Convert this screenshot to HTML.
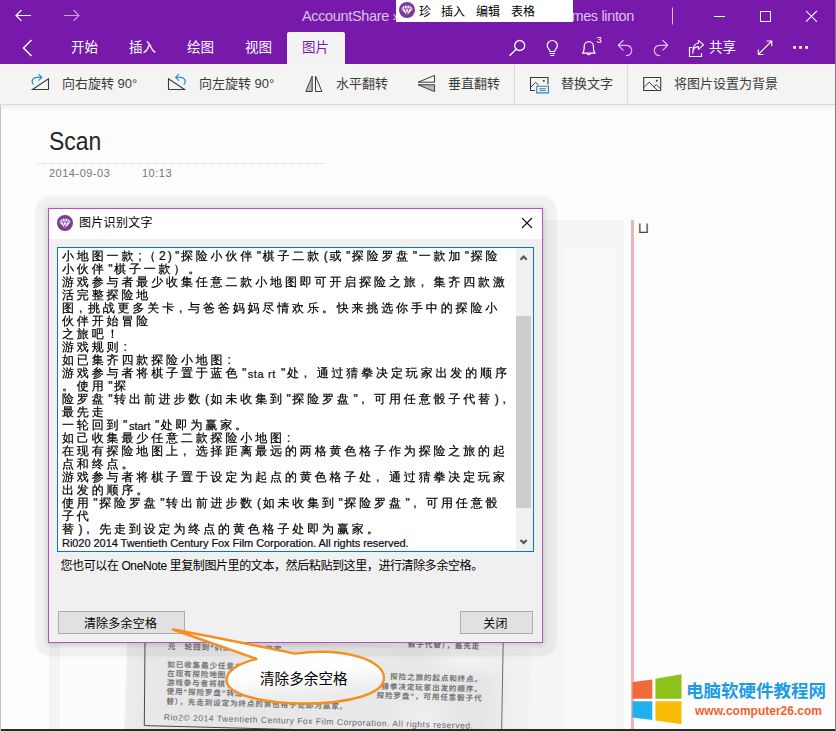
<!DOCTYPE html>
<html lang="zh-CN">
<head>
<meta charset="utf-8">
<title>Scan - OneNote</title>
<style>
*{box-sizing:border-box;margin:0;padding:0}
html,body{width:836px;height:731px;overflow:hidden;background:#fdfdfd}
body{position:relative;font-family:"Liberation Sans","Noto Sans CJK SC",sans-serif;color:#222}
.abs{position:absolute}
.nw{white-space:nowrap}
#titlebar{left:0;top:0;width:836px;height:64px;background:#7719aa}
.ttxt{color:#dcc3ea;font-size:14.5px;line-height:32px;top:0;height:32px;letter-spacing:-0.35px}
.tab{color:#fff;font-size:13.5px;top:32px;height:32px;line-height:32px}
#tabact{left:287px;top:32px;width:58px;height:32px;background:#f3f3f3;border-radius:2px 2px 0 0}
#ribbon{left:0;top:64px;width:836px;height:41px;background:#f3f4f3;border-bottom:1px solid #d9d9d9}
.rb{top:64px;height:40px;line-height:40px;font-size:13px;color:#3c3c3c}
.sep{top:64px;width:1px;height:40px;background:#dcdcdc}
#page{left:1px;top:105px;width:835px;height:626px;background:#fdfdfd}
svg{position:absolute;overflow:visible}
#ovl{left:396px;top:0;width:177px;height:22px;background:#fff}
.ovt{top:5px;font-size:12px;line-height:14px;color:#000}
.gem{border-radius:50%;background:#7d3a98}
#ptitle{left:49px;top:123px;font-size:26.5px;line-height:36px;color:#262626;transform:scaleX(.865);transform-origin:0 0}
#pline{left:37px;top:163px;width:288px;height:0;border-top:1px dotted #dadada}
.pdate{top:166px;font-size:11px;line-height:14px;color:#757575;letter-spacing:.5px}
#dlg{left:48px;top:208px;width:495px;height:435px;background:#f0f0f0;border:1px solid #b94fc6;box-shadow:0 1px 5px 1px rgba(0,0,0,.15)}
#halo{left:35.5px;top:195.5px;width:520px;height:460px;border-radius:15px;background:rgba(0,0,0,.048);box-shadow:0 0 2px 1px rgba(0,0,0,.03)}
#dlgbar{left:49px;top:209px;width:493px;height:30px;background:#fff}
#dlgt{left:79px;top:215px;font-size:12px;line-height:16px;color:#000;letter-spacing:.3px}
#ta{left:57px;top:247px;width:477px;height:305px;background:#fff;border:1px solid #0078d7}
#sb{left:516px;top:248px;width:17px;height:303px;background:#f0f0f0}
#thumb{left:516px;top:316px;width:15px;height:192px;background:#cdcdcd}
#txt{left:62px;top:250px;width:460px;font-family:"Liberation Sans","WenQuanYi Zen Hei",sans-serif;font-size:12px;line-height:13px;color:#000;letter-spacing:2.86px;font-weight:400;-webkit-text-stroke:.22px #000}
#txt div{height:13px;white-space:nowrap}
#txt b{display:inline-block;width:7.43px;letter-spacing:0;font-weight:inherit;text-align:center}
#txt u{display:inline-block;width:14.86px;letter-spacing:0;text-decoration:none;text-align:left;padding-left:2px}
#txt s{display:inline-block;width:11px;letter-spacing:0;text-decoration:none;text-align:left;padding-left:2px}
#txt i{font-size:11px;position:relative;top:.7px;font-style:normal;letter-spacing:0;font-weight:400;color:#101030}

#scan{left:49px;top:220px;width:575px;height:511px;background:#f5f5f5;overflow:hidden}
#scan .w{position:absolute;background:#fcfcfc}
#paper{position:absolute;left:78px;top:418px;width:404px;height:100px;background:radial-gradient(ellipse 55px 22px at 345px 12px,rgba(255,255,255,.55),rgba(255,255,255,0)),radial-gradient(ellipse 40px 30px at 300px 70px,rgba(255,255,255,.35),rgba(255,255,255,0)),radial-gradient(ellipse 50px 18px at 120px 8px,rgba(255,255,255,.3),rgba(255,255,255,0)),linear-gradient(90deg,#eeeeee 0,#e8e8e8 5%,#e6e6e6 25%,#e9e9e9 60%,#e5e5e5 88%,#efefef 96%,#f2f2f2 100%);transform:rotate(1.6deg);transform-origin:0 0}
#paper .ln{position:absolute;white-space:nowrap;font-size:7.6px;line-height:9px;letter-spacing:.85px;color:#747474;font-weight:700;font-family:"Liberation Sans","Noto Sans CJK SC",sans-serif}
#paper .r{right:47px;left:auto}
#paper .en{font-size:8.5px;letter-spacing:.53px;font-weight:400;color:#666}
#pink{left:631px;top:220px;width:3px;height:511px;background:#f4b3b3}
#cup{left:637.5px;top:219px;font-family:"DejaVu Sans",sans-serif;font-size:15px;line-height:18px;color:#444}
#bl{left:0;top:729px;width:836px;height:2px;background:#2a2a2a}
#re{left:835px;top:0;width:1px;height:731px;background:rgba(122,118,135,.95)}
#rstrip{left:0;top:105px;width:835px;height:3.5px;background:linear-gradient(#f2f1f1,#f6f6f6)}
#le{left:0;top:105px;width:1px;height:626px;background:#c2c2c8}
#ctext{left:260px;top:668px;font-size:14.6px;line-height:22px;color:#000}
#lg1{left:686px;top:678px;font-size:17.5px;line-height:26px;font-weight:700;color:#1b9ce2}
#lg2{left:695px;top:703px;font-size:12px;line-height:16px;font-weight:700;color:#f0622c;font-family:"Liberation Sans",sans-serif}
#lbl{left:60.5px;top:557.5px;font-size:12px;line-height:16px;color:#000;letter-spacing:-.4px}
.btn{top:611px;height:23px;background:#e1e1e1;border:1px solid #adadad;font-size:12px;line-height:23px;text-align:center;color:#000;padding:1px 2px 0 0;letter-spacing:.2px}

</style>
</head>
<body>
<!-- ===== title bar ===== -->
<div id="titlebar" class="abs"></div>
<svg style="left:0;top:0" width="836" height="64" viewBox="0 0 836 64" fill="none" stroke-linecap="square">
  <!-- back / forward -->
  <path d="M16.5 15.5H30.5M21 10.5L16 15.5L21 20.5" stroke="#fff" stroke-width="1.2"/>
  <path d="M64.5 15.5H78.5M74 10.5L79 15.5L74 20.5" stroke="#c9a2dc" stroke-width="1.2"/>
  <!-- window controls -->
  <path d="M672.5 8V24" stroke="#d9bfe6" stroke-width="1"/>
  <path d="M714.5 16.5H724.5" stroke="#fff" stroke-width="1"/>
  <rect x="760.5" y="11.5" width="10" height="10" stroke="#fff" stroke-width="1"/>
  <path d="M806.5 11.3L816.5 21.3M816.5 11.3L806.5 21.3" stroke="#fff" stroke-width="1.1"/>
  <!-- collapse chevron -->
  <path d="M31 40.5L23.5 48L31 55.5" stroke="#fff" stroke-width="1.5"/>
</svg>
<div class="abs nw ttxt" style="left:302px">AccountShare »</div>
<div class="abs nw ttxt" style="right:202px">James linton</div>

<div id="tabact" class="abs"></div>
<div class="abs nw tab" style="left:71px">开始</div>
<div class="abs nw tab" style="left:129px">插入</div>
<div class="abs nw tab" style="left:187px">绘图</div>
<div class="abs nw tab" style="left:245px">视图</div>
<div class="abs nw tab" style="left:302px;color:#7719aa">图片</div>
<div class="abs nw tab" style="left:709px">共享</div>

<div id="ovl" class="abs"></div>
<svg style="left:399px;top:2px" width="16" height="16" viewBox="0 0 16 16"><circle cx="8" cy="8" r="8" fill="#7d3a98"/><path d="M5 3.7H11L13.8 7L8 13.2L2.2 7Z" fill="#fff"/><path d="M2.2 7H13.8M5 3.7L6.2 7L8 13.2L9.8 7L11 3.7M8 3.7V7" stroke="#7d3a98" stroke-width=".8" fill="none"/></svg>
<div class="abs nw ovt" style="left:419px">珍</div>
<div class="abs nw ovt" style="left:441px">插入</div>
<div class="abs nw ovt" style="left:476px">编辑</div>
<div class="abs nw ovt" style="left:511px">表格</div>

<!-- ===== ribbon ===== -->
<div id="ribbon" class="abs"></div>
<div class="abs nw rb" style="left:62px">向右旋转 90°</div>
<div class="abs nw rb" style="left:199px">向左旋转 90°</div>
<div class="abs nw rb" style="left:336px">水平翻转</div>
<div class="abs nw rb" style="left:448px">垂直翻转</div>
<div class="abs nw rb" style="left:561px">替换文字</div>
<div class="abs nw rb" style="left:674px">将图片设置为背景</div>
<div class="abs sep" style="left:514px"></div>
<div class="abs sep" style="left:627px"></div>

<svg style="left:0;top:0" width="836" height="110" viewBox="0 0 836 110" fill="none" stroke-linecap="round" stroke-linejoin="round">
  <!-- search -->
  <circle cx="519.7" cy="45.5" r="5" stroke="#fff" stroke-width="1.3"/>
  <path d="M516.2 49.2L510 55.3" stroke="#fff" stroke-width="1.4"/>
  <!-- bulb -->
  <path d="M550 51.5C550 49.5 547.2 48.6 547.2 45.6A5.1 5.1 0 0 1 557.4 45.6C557.4 48.6 554.6 49.5 554.6 51.5Z" stroke="#fff" stroke-width="1.2"/>
  <path d="M550 53.5H554.6M550.8 55.5H553.8" stroke="#fff" stroke-width="1.1"/>
  <!-- bell -->
  <path d="M582.5 53.2H595.1C593.5 51.7 593.4 50 593.4 46.3A4.6 4.6 0 0 0 584.2 46.3C584.2 50 584.1 51.7 582.5 53.2Z" stroke="#fff" stroke-width="1.25"/>
  <path d="M587.2 53.6A1.7 1.7 0 0 0 590.4 53.6" stroke="#fff" stroke-width="1.2"/>
  <!-- undo -->
  <path d="M623.1 40.5L618.3 45.3L623.1 50.1M618.5 45.3H626.8A5.15 5.15 0 0 1 626.3 55.6" stroke="#dfb9ec" stroke-width="1.25"/>
  <!-- redo -->
  <path d="M662.9 40.5L667.7 45.3L662.9 50.1M667.5 45.3H659.2A5.15 5.15 0 0 0 659.7 55.6" stroke="#dfb9ec" stroke-width="1.25"/>
  <!-- share -->
  <path d="M692.5 47.5H689.5V56.5H701.5V53" stroke="#fff" stroke-width="1.2" stroke-linecap="butt" stroke-linejoin="miter"/>
  <path d="M692.8 53.2C692.8 48.8 695 46.6 698.4 46.6V49.4L703.5 44.8L698.4 40.4V43.3C694.6 43.3 692.8 46.5 692.8 53.2Z" stroke="#fff" stroke-width="1.1"/>
  <!-- expand -->
  <path d="M758.3 54.5L771.8 41M767 41H771.8V45.8M758.3 49.7V54.5H763.1" stroke="#fff" stroke-width="1.1"/>
  <!-- more -->
  <rect x="793.2" y="46" width="2.8" height="2.8" rx=".6" fill="#fff"/><rect x="799.2" y="46" width="2.8" height="2.8" rx=".6" fill="#fff"/><rect x="805.2" y="46" width="2.8" height="2.8" rx=".6" fill="#fff"/>

  <!-- rotate right -->
  <path d="M32.5 89.5H48.5V78.8Z" stroke="#3b3b3b" stroke-width="1.1" stroke-linejoin="miter"/>
  <path d="M33.2 84.2C30.6 80.6 33.2 77.4 37.2 77.4H41.4M38.8 74.4L41.8 77.4L38.8 80.4" stroke="#2b8fd6" stroke-width="1.2"/>
  <!-- rotate left -->
  <path d="M184.5 89.5H168.5V78.8Z" stroke="#3b3b3b" stroke-width="1.1" stroke-linejoin="miter"/>
  <path d="M184.2 84.2C186.8 80.6 184.2 77.4 180.2 77.4H176M178.6 74.4L175.6 77.4L178.6 80.4" stroke="#2b8fd6" stroke-width="1.2"/>
  <!-- flip horizontal -->
  <path d="M312.2 76.5V91.5H306.2Z" fill="#b9b9b9" stroke="#3b3b3b" stroke-width="1" stroke-linejoin="miter"/>
  <path d="M315.5 76.5V91.5H321.5Z" stroke="#3b3b3b" stroke-width="1" stroke-linejoin="miter"/>
  <!-- flip vertical -->
  <path d="M434.5 75.8V82.2H418.5Z" stroke="#3b3b3b" stroke-width="1" stroke-linejoin="miter"/>
  <path d="M434.5 91.2V84.8H418.5Z" fill="#b9b9b9" stroke="#3b3b3b" stroke-width="1" stroke-linejoin="miter"/>
  <!-- alt text -->
  <path d="M535 90.5H530.5V77.5H548V84.5" stroke="#3b3b3b" stroke-width="1.1" stroke-linecap="butt" stroke-linejoin="miter"/>
  <path d="M531 87L535.5 82.3L538.5 85.2" stroke="#3b3b3b" stroke-width="1"/>
  <circle cx="543.8" cy="80.8" r="1" fill="#3b3b3b"/>
  <rect x="536.7" y="86.3" width="11.8" height="6.6" stroke="#1e88d2" stroke-width="1.1" fill="#f3f4f3"/>
  <path d="M539.4 88.7H545.8M539.4 90.6H545.8" stroke="#4d4d4d" stroke-width="0.8" stroke-linecap="butt"/>
  <!-- set as background -->
  <rect x="643.7" y="77.5" width="17" height="13" stroke="#3b3b3b" stroke-width="1.1"/>
  <path d="M644 87.3L649.2 82.2L657.3 90.2M654 86.8L656.4 84.6L660.4 88.6" stroke="#3b3b3b" stroke-width="1"/>
  <circle cx="656.8" cy="80.8" r="1" fill="#3b3b3b"/>
</svg>
<div class="abs nw" style="left:596.5px;top:35px;font-size:9.5px;line-height:10px;color:#fff">3</div>

<!-- ===== page ===== -->
<div id="page" class="abs"></div>
<div id="ptitle" class="abs nw">Scan</div>
<div id="pline" class="abs"></div>
<div class="abs nw pdate" style="left:49px">2014-09-03</div>
<div class="abs nw pdate" style="left:142px">10:13</div>
<div id="scan" class="abs">
  <div class="w" style="left:11px;top:423px;width:67px;height:90px"></div>
  <div class="w" style="left:516px;top:28px;width:50px;height:483px;opacity:.55"></div>
  <div id="paper">
    <div class="ln" style="left:41px;top:3px">元　轮回到“start”处即为赢家。</div>
    <div class="ln" style="left:281px;top:-6px">骰子代替），最先走</div>
    <div class="ln" style="left:41px;top:21px">如已收集最少任意二款探险小地图：</div>
    <div class="ln" style="left:41px;top:30px">在现有探险地图上，选择距离最远的</div>
    <div class="ln" style="left:41px;top:39px">游戏参与者将棋子置于设定为起点的</div>
    <div class="ln" style="left:41px;top:48px">使用“探险罗盘”转出前进步数（如</div>
    <div class="ln r" style="top:27px">探险之旅的起点和终点。</div>
    <div class="ln r" style="top:36.5px">猜拳决定玩家出发的顺序。</div>
    <div class="ln r" style="top:46px">探险罗盘”，可用任意骰子代</div>
    <div class="ln" style="left:41px;top:58px">替），先走到设定为终点的黄色格子处即为赢家。</div>
    <div class="ln en" style="left:39px;top:74px">Rio2© 2014 Twentieth Century Fox Film Corporation. All rights reserved.</div>
  </div>
  <svg style="left:0;top:0" width="575" height="511" viewBox="49 220 575 511" fill="none"><path d="M145 642L144.3 725.6L330 730.5L503 735" stroke="#4a4a4a" stroke-width="1"/><path d="M503.2 642L501.6 731" stroke="#6e6e6e" stroke-width="1"/></svg>
</div>
<div id="pink" class="abs"></div>
<div id="cup" class="abs nw">⊔</div>
<!--PAGE-->
<div id="halo" class="abs"></div>
<div id="dlg" class="abs"></div>
<div id="dlgbar" class="abs"></div>
<svg style="left:57.2px;top:215px" width="16" height="16" viewBox="0 0 16 16"><circle cx="8" cy="8" r="8" fill="#7d3a98"/><path d="M5 3.7H11L13.8 7L8 13.2L2.2 7Z" fill="#fff"/><path d="M2.2 7H13.8M5 3.7L6.2 7L8 13.2L9.8 7L11 3.7M8 3.7V7" stroke="#7d3a98" stroke-width=".8" fill="none"/></svg>
<div id="dlgt" class="abs nw">图片识别文字</div>
<svg style="left:521px;top:217px" width="12" height="12" viewBox="0 0 12 12"><path d="M1 1L11 11M11 1L1 11" stroke="#111" stroke-width="1.1"/></svg>
<div id="ta" class="abs"></div>
<div id="sb" class="abs"></div>
<div id="thumb" class="abs"></div>
<svg style="left:516px;top:248px" width="17" height="303" viewBox="0 0 17 303" fill="none"><path d="M4.5 11.7L7.6 8.6L10.7 11.7" stroke="#555" stroke-width="2.1"/><path d="M4.5 291.9L7.6 295L10.7 291.9" stroke="#555" stroke-width="2.1"/></svg>
<div id="txt" class="abs">
<div>小地图一款<b>;</b>（<b>2</b><b>)</b><b>"</b>探险小伙伴<b>"</b>棋子二款<b>(</b>或<b>"</b>探险罗盘<b>"</b>一款加<b>"</b>探险</div>
<div>小伙伴<b>"</b>棋子一款）。</div>
<div>游戏参与者最少收集任意二款小地图即可开启探险之旅<u>,</u>集齐四款激</div>
<div>活完整探险地</div>
<div>图<s>,</s>挑战更多关卡<s>,</s>与爸爸妈妈尽情欢乐。快来挑选你手中的探险小</div>
<div>伙伴开始冒险</div>
<div>之旅吧！</div>
<div>游戏规则<b>:</b></div>
<div>如已集齐四款探险小地图<b>:</b></div>
<div>游戏参与者将棋子置于蓝色<b>"</b><i style="letter-spacing:.6px">sta rt </i><b>"</b>处<u>,</u>通过猜拳决定玩家出发的顺序</div>
<div>。使用<b>"</b>探</div>
<div>险罗盘<b>"</b>转出前进步数<b>(</b>如未收集到<b>"</b>探险罗盘<b>"</b><u>,</u>可用任意骰子代替<b>)</b><b>,</b></div>
<div>最先走</div>
<div>一轮回到<b>"</b><i>start </i><b>"</b>处即为赢家。</div>
<div>如己收集最少任意二款探险小地图<b>:</b></div>
<div>在现有探险地图上<u>,</u>选择距离最远的两格黄色格子作为探险之旅的起</div>
<div>点和终点。</div>
<div>游戏参与者将棋子置于设定为起点的黄色格子处<u>,</u>通过猜拳决定玩家</div>
<div>出发的顺序。</div>
<div>使用<b>"</b>探险罗盘<b>"</b>转出前进步数<b>(</b>如未收集到<b>"</b>探险罗盘<b>"</b><u>,</u>可用任意骰</div>
<div>子代</div>
<div>替<b>)</b><u>,</u>先走到设定为终点的黄色格子处即为赢家。</div>
<div><i style="letter-spacing:-.05px">Ri020 2014 Twentieth Century Fox Film Corporation. All rights reserved.</i></div>
</div>

<div id="lbl" class="abs nw">您也可以在 OneNote 里复制图片里的文本，然后粘贴到这里，进行清除多余空格。</div>
<div class="abs btn" style="left:58px;width:127px">清除多余空格</div>
<div class="abs btn" style="left:460px;width:73px">关闭</div>
<!--DIALOG-->
<svg style="left:0;top:0" width="836" height="731" viewBox="0 0 836 731">
  <defs><linearGradient id="cg" x1="0" y1="0" x2=".3" y2="1"><stop offset="0" stop-color="#fff"/><stop offset=".7" stop-color="#fefefe"/><stop offset="1" stop-color="#ececec"/></linearGradient></defs>
  <path d="M173 629.5C215 637 262 647 295 653.6C345 647 384 660 384 678C384 694 349 703.5 305 703.5C261 703.5 226.5 694 226.5 680C226.5 671 238 663.5 256.5 659C232 650 205 641 173 629.5Z" fill="url(#cg)" stroke="#f5901e" stroke-width="2.4" stroke-linejoin="round"/>
</svg>
<div id="ctext" class="abs nw">清除多余空格</div>
<!--CALLOUT-->
<svg style="left:0;top:0" width="836" height="731" viewBox="0 0 836 731">
  <path d="M632.4 682L652.3 679.4V698.8H632.4Z" fill="#f26a3b"/>
  <path d="M655.4 678.8L681.5 674.2V698.8H655.4Z" fill="#8cc21a"/>
  <path d="M632.4 701.3H652.3V720L632.4 717.4Z" fill="#1fb0ee"/>
  <path d="M655.4 701.3H681.5V724.2L655.4 720.4Z" fill="#fbbc09"/>
</svg>
<div id="lg1" class="abs nw">电脑软硬件教程网</div>
<div id="lg2" class="abs nw">www.computer26.com</div>
<div id="bl" class="abs"></div>
<div id="rstrip" class="abs"></div>
<div id="le" class="abs"></div>
<div id="re" class="abs"></div>
<!--LOGO-->
</body>
</html>
